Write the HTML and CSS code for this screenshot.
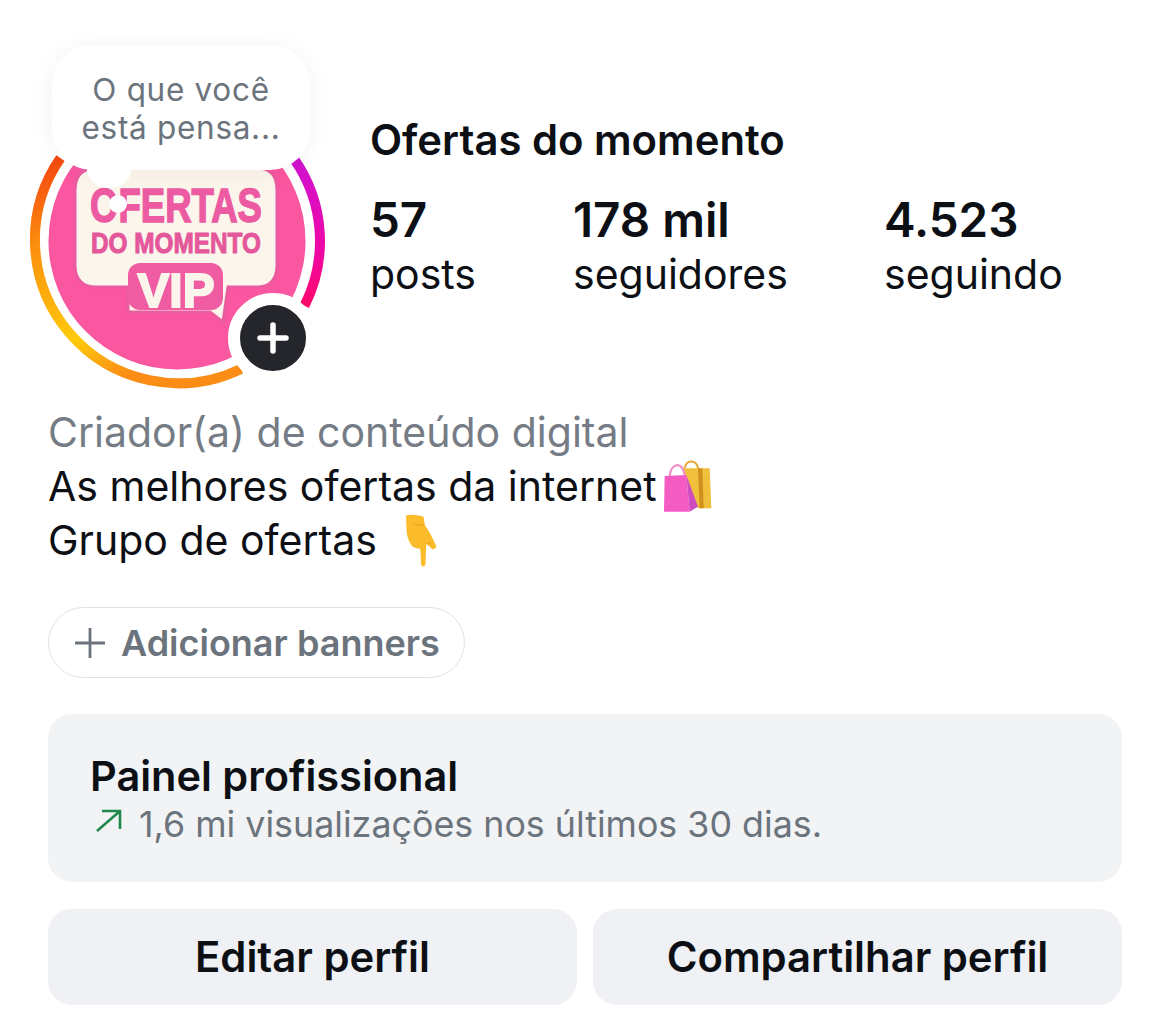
FILE: index.html
```html
<!DOCTYPE html>
<html lang="pt-BR">
<head>
  <meta charset="UTF-8">
  <title>Ofertas do momento</title>
  <link rel="stylesheet" href="styles.css">
</head>
<body>

  <header class="profile">
    <div class="avatar">
      <svg class="avatar-art" width="298" height="298" viewBox="0 0 298 298">
        <defs>
          <linearGradient id="ringLeft" x1="0" y1="0" x2="0.35" y2="1">
            <stop offset="0" stop-color="#f4400f"/>
            <stop offset="0.35" stop-color="#fb8f0e"/>
            <stop offset="0.78" stop-color="#fecb0c"/>
            <stop offset="1" stop-color="#fb8c16"/>
          </linearGradient>
          <linearGradient id="ringRight" x1="0" y1="0" x2="0" y2="1">
            <stop offset="0" stop-color="#cf14d0"/>
            <stop offset="0.6" stop-color="#ee07a8"/>
            <stop offset="1" stop-color="#fd0a6c"/>
          </linearGradient>
        </defs>
        <path class="ring" stroke="url(#ringLeft)" d="M32.400 66.100 A143.500 143.500 0 0 0 212.900 276.900"/>
        <path class="ring" stroke="url(#ringRight)" d="M266.200 67.100 A143 143 0 0 1 276.500 213.700"/>
        <circle cx="149" cy="149" r="128.500" fill="#fb56a0"/>
        <path fill="#fbf5ec" stroke="#ea5ba0" stroke-width="3" d="M47 98 Q47 76 69 76 H229 Q249 76 249 98 V173 Q249 195 229 195 H200 L195 230 L182 220 H100 V195 H68 Q47 195 47 173 Z"/>
        <rect x="100" y="171" width="95" height="47" rx="12" fill="#f05ca2"/>
        <text class="logo-word" x="148" y="130" text-anchor="middle" textLength="172" lengthAdjust="spacingAndGlyphs">OFERTAS</text>
        <text class="logo-sub" x="148" y="161" text-anchor="middle" textLength="170" lengthAdjust="spacingAndGlyphs">DO MOMENTO</text>
        <text class="logo-vip" x="148" y="215" text-anchor="middle" textLength="77" lengthAdjust="spacingAndGlyphs">VIP</text>
      </svg>
      <div class="thought">O que você<br>está pensa...</div>
      <span class="thought-tail"></span>
      <span class="thought-dot"></span>
      <span class="add-story">
        <svg width="32" height="32" viewBox="0 0 32 32"><path d="M16 3 V29 M3 16 H29" stroke="#fff" stroke-width="5.500" stroke-linecap="round"/></svg>
      </span>
    </div>

    <div class="summary">
      <h1 class="name">Ofertas do momento</h1>
      <div class="stats">
        <div class="stat stat-posts"><strong>57</strong><span>posts</span></div>
        <div class="stat stat-followers"><strong>178 mil</strong><span>seguidores</span></div>
        <div class="stat"><strong>4.523</strong><span>seguindo</span></div>
      </div>
    </div>
  </header>

  <section class="bio">
    <p class="category">Criador(a) de conteúdo digital</p>
    <p>As melhores ofertas da internet<svg class="emoji-bags" width="50" height="52" viewBox="0 0 150 156">
        <path d="M65 25 C70 -2 100 -2 105 25" fill="none" stroke="#e3a92c" stroke-width="6"/>
        <path d="M60 25 H140 L145 145 H105 Z" fill="#f0c03c"/>
        <path d="M105 25 H118 L122 145 H110 Z" fill="#cf8f1c"/>
        <path d="M20 48 C25 5 60 5 65 45" fill="none" stroke="#ee8fc4" stroke-width="7"/>
        <path d="M5 48 L70 45 L80 155 L3 155 Z" fill="#f45cc4"/>
        <path d="M70 45 L105 140 L80 155 Z" fill="#cf4dc0"/>
      </svg></p>
    <p>Grupo de ofertas<svg class="emoji-hand" width="34" height="54" viewBox="0 0 102 166">
        <path d="M8 8 C20 2 50 6 62 12 L66 38 C78 54 92 80 102 105 L90 112 L72 95 L70 100 L68 155 C66 168 56 168 54 155 L52 110 C40 110 30 106 25 100 C16 86 12 74 10 60 Z" fill="#fbbc2b"/>
        <path d="M72 95 L84 92 M30 32 C40 38 52 38 64 36" fill="none" stroke="#ea9d14" stroke-width="3"/>
      </svg></p>
  </section>

  <button class="banners">
    <svg width="30" height="30" viewBox="0 0 30 30"><path d="M15 0 V30 M0 15 H30" stroke="#6b737c" stroke-width="2.800"/></svg>
    Adicionar banners
  </button>

  <section class="panel">
    <h2>Painel profissional</h2>
    <p>
      <svg width="32" height="32" viewBox="0 0 32 32"><path d="M7 23 L30 3 M12 3 H30 V21" fill="none" stroke="#1f8a4c" stroke-width="2.600"/></svg>
      1,6 mi visualizações nos últimos 30 dias.
    </p>
  </section>

  <div class="actions">
    <button class="action">Editar perfil</button>
    <button class="action">Compartilhar perfil</button>
  </div>

</body>
</html>
```

FILE: styles.css
```css
* {
  box-sizing: border-box;
}

body {
  margin: 0;
  padding: 92px 48px 0;
  font-family: Inter, "Liberation Sans", sans-serif;
  background-color: #fff;
  color: #0c1014;
}

h1, h2, p {
  margin: 0;
}

.profile {
  display: flex;
  gap: 44px;
  margin-left: -20px;
}

.avatar {
  position: relative;
  flex: 0 0 298px;
  height: 298px;
}

.avatar-art {
  display: block;
}

.ring {
  fill: none;
  stroke-width: 10;
}

.logo-word, .logo-sub, .logo-vip {
  font-family: "Liberation Sans", sans-serif;
  font-weight: bold;
}

.logo-word {
  font-size: 49px;
  fill: #ec5ba2;
  stroke: #ec5ba2;
  stroke-width: 1.5;
}

.logo-sub {
  font-size: 30px;
  fill: #e4579b;
  stroke: #e4579b;
  stroke-width: 1;
}

.logo-vip {
  font-size: 49px;
  fill: #fbf5ec;
  stroke: #fbf5ec;
  stroke-width: 2;
}

.thought {
  position: absolute;
  top: -47px;
  left: 24px;
  width: 258px;
  height: 125px;
  padding-top: 26px;
  border-radius: 40px;
  background: #fff;
  box-shadow: 0 2px 24px rgba(0, 0, 0, 0.05);
  color: #6b737c;
  font-size: 31.500px;
  line-height: 38px;
  letter-spacing: 0.7px;
  text-align: center;
}

.thought-tail {
  position: absolute;
  top: 60px;
  left: 59px;
  width: 44px;
  height: 36px;
  border-radius: 50%;
  background: #fff;
}

.thought-dot {
  position: absolute;
  top: 103px;
  left: 81px;
  width: 18px;
  height: 18px;
  border-radius: 50%;
  background: #fff;
}

.add-story {
  position: absolute;
  left: 200px;
  top: 201px;
  width: 90px;
  height: 90px;
  display: flex;
  align-items: center;
  justify-content: center;
  border: 12px solid #fff;
  border-radius: 50%;
  background: #24262b;
}

.summary {
  padding-top: 21px;
}

.name {
  font-size: 41.800px;
  font-weight: 600;
  line-height: 54px;
}

.stats {
  display: flex;
  margin-top: 26px;
}

.stat {
  display: flex;
  flex-direction: column;
  font-size: 41px;
  line-height: 54px;
}

.stat strong {
  font-size: 47.500px;
  font-weight: 600;
}

.stat-posts {
  width: 203px;
}

.stat-followers {
  width: 311px;
}

.bio {
  margin-top: 15px;
  font-size: 41px;
  line-height: 54px;
}

.bio p {
  height: 54px;
}

.category {
  color: #757c85;
}

.emoji-bags {
  margin-left: 6px;
  vertical-align: -11px;
}

.emoji-hand {
  margin-left: 26px;
  vertical-align: -12px;
}

.banners {
  display: flex;
  align-items: center;
  gap: 16px;
  width: 417px;
  height: 71px;
  margin-top: 40px;
  padding: 0 0 0 26px;
  border: 1.500px solid #dfe1e4;
  border-radius: 36px;
  background: #fff;
  color: #6b737c;
  font-family: inherit;
  font-size: 36px;
  font-weight: 600;
  white-space: nowrap;
}

.panel {
  height: 168px;
  margin-top: 36px;
  padding: 35px 42px 0;
  border-radius: 24px;
  background: #f1f3f5;
}

.panel h2 {
  font-size: 41.500px;
  font-weight: 600;
  line-height: 54px;
}

.panel p {
  display: flex;
  align-items: center;
  gap: 17px;
  color: #6b737c;
  font-size: 35.800px;
  line-height: 42px;
}

.actions {
  display: flex;
  gap: 16px;
  margin-top: 27px;
}

.action {
  flex: 1;
  height: 96px;
  border: 0;
  border-radius: 24px;
  background: #eff1f5;
  color: #0c1014;
  font-family: inherit;
  font-size: 41.800px;
  font-weight: 600;
}
```
